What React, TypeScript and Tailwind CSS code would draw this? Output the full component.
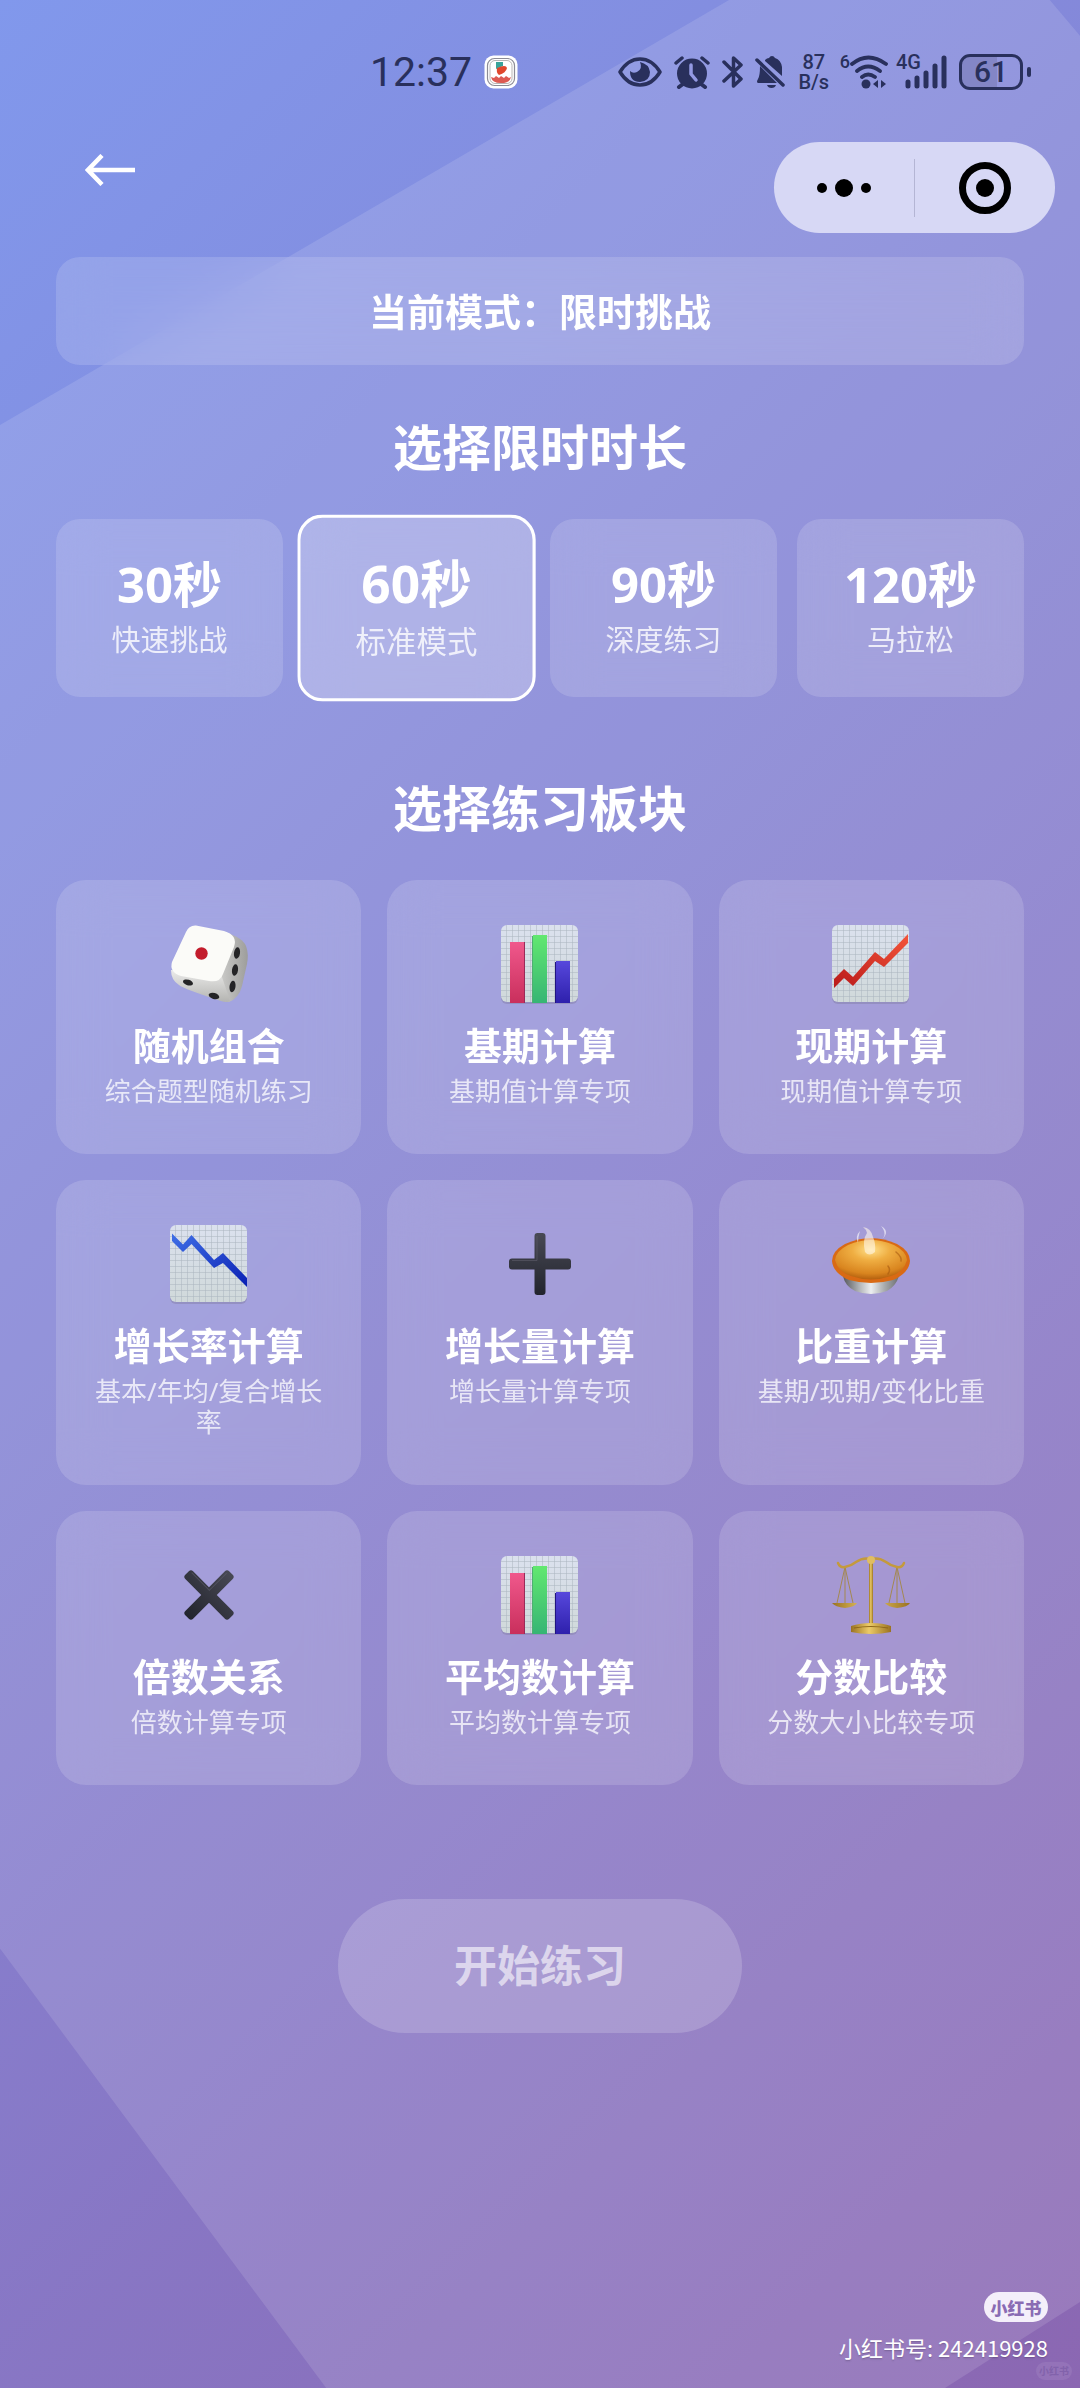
import { useState, type ReactNode } from "react";

const durations = [
  { value: 30, label: "快速挑战" },
  { value: 60, label: "标准模式" },
  { value: 90, label: "深度练习" },
  { value: 120, label: "马拉松" },
];

function GridPaper({ id }: { id: string }) {
  return (
    <>
      <defs>
        <pattern id={id + "-grid"} width="6" height="6" patternUnits="userSpaceOnUse">
          <path d="M6 0H0V6" fill="none" stroke="#a9b4be" strokeWidth="1" />
        </pattern>
        <linearGradient id={id + "-paper"} x1="0" y1="0" x2="0" y2="1">
          <stop offset="0" stopColor="#dbe1ee" />
          <stop offset="1" stopColor="#d0d9da" />
        </linearGradient>
      </defs>
      <rect x="1" y="2" width="77" height="78" rx="6" fill="#8a86b0" opacity="0.6" />
      <rect x="1" y="1" width="77" height="77" rx="6" fill={"url(#" + id + "-paper)"} />
      <rect x="1" y="1" width="77" height="77" rx="6" fill={"url(#" + id + "-grid)"} />
    </>
  );
}

function DiceIcon() {
  return (
    <svg viewBox="0 0 80 80" className="size-20" aria-hidden="true">
      <defs>
        <linearGradient id="dice-right" x1="0" y1="0" x2="1" y2="0">
          <stop offset="0" stopColor="#d4d4d2" />
          <stop offset="1" stopColor="#9d9d9b" />
        </linearGradient>
        <linearGradient id="dice-front" x1="0" y1="0" x2="0" y2="1">
          <stop offset="0" stopColor="#ebebea" />
          <stop offset="1" stopColor="#b4b4b1" />
        </linearGradient>
      </defs>
      <path d="M56 8Q74 14 77 22Q80 30 78 40L73 62Q70 74 60 78Q52 78 46 66Z" fill="url(#dice-right)" />
      <path d="M2 46Q2 56 10 61Q15 65 52 77Q58 79 61 77L52 50Z" fill="url(#dice-front)" />
      <path d="M17 8Q20 1 27 1.500L55 7Q69 11 65 23L54 50Q51 59 40 57L12 52Q0 48 3 38Z" fill="#fbfbf8" />
      <circle cx="32.500" cy="29.500" r="6.200" fill="#c31c2c" />
      <ellipse cx="68" cy="29" rx="3" ry="5.800" transform="rotate(8 68 29)" fill="#242426" />
      <ellipse cx="66" cy="46" rx="3" ry="5.800" transform="rotate(8 66 46)" fill="#242426" />
      <ellipse cx="63.500" cy="62.500" rx="3" ry="5.800" transform="rotate(8 63.500 62.500)" fill="#242426" />
      <ellipse cx="19" cy="58.500" rx="5.200" ry="2.800" transform="rotate(18 19 58.500)" fill="#242426" />
      <ellipse cx="45" cy="72" rx="5.400" ry="3" transform="rotate(16 45 72)" fill="#242426" />
    </svg>
  );
}

function BarsIcon({ id }: { id: string }) {
  return (
    <svg viewBox="0 0 80 80" className="size-20" aria-hidden="true">
      <GridPaper id={id} />
      <defs>
        <linearGradient id={id + "-r"} x1="0" y1="0" x2="0" y2="1">
          <stop offset="0" stopColor="#f0588c" />
          <stop offset="1" stopColor="#c92f5c" />
        </linearGradient>
        <linearGradient id={id + "-g"} x1="0" y1="0" x2="0" y2="1">
          <stop offset="0" stopColor="#62e870" />
          <stop offset="1" stopColor="#36b574" />
        </linearGradient>
        <linearGradient id={id + "-b"} x1="0" y1="0" x2="0" y2="1">
          <stop offset="0" stopColor="#5748dc" />
          <stop offset="1" stopColor="#2e20ac" />
        </linearGradient>
      </defs>
      <path d="M10 18h14v61H10z" fill={"url(#" + id + "-r)"} />
      <path d="M24 18h1v61h-1z" fill="#9a2a58" />
      <path d="M33 11h14v68H33z" fill={"url(#" + id + "-g)"} />
      <path d="M32 12H33v67h-1z" fill="#4fae72" />
      <path d="M56 37h14v42H56z" fill={"url(#" + id + "-b)"} />
      <path d="M55 38h1v41h-1z" fill="#211480" />
    </svg>
  );
}

function RisingIcon() {
  return (
    <svg viewBox="0 0 80 80" className="size-20" aria-hidden="true">
      <GridPaper id="rise" />
      <defs>
        <linearGradient id="rise-line" x1="0" y1="1" x2="1" y2="0">
          <stop offset="0" stopColor="#b91a1a" />
          <stop offset="1" stopColor="#f4553a" />
        </linearGradient>
      </defs>
      <path d="M3 55L13 45L22 53L44 28L53 35L77 10V19L53 43L44 37L22 62L13 54L3 64Z" fill="url(#rise-line)" />
    </svg>
  );
}

function FallingIcon() {
  return (
    <svg viewBox="0 0 80 80" className="size-20" aria-hidden="true">
      <GridPaper id="fall" />
      <defs>
        <linearGradient id="fall-line" x1="0" y1="0" x2="1" y2="1">
          <stop offset="0" stopColor="#3f6fe6" />
          <stop offset="1" stopColor="#0a1fb4" />
        </linearGradient>
      </defs>
      <path d="M3 9.500L14 20.500L22.500 11L45 36L54 29L78 54V63L54 39L45 44L22.500 20L14 28L3 17Z" fill="url(#fall-line)" />
    </svg>
  );
}

function CrossIcon({ diagonal = false }: { diagonal?: boolean }) {
  const id = diagonal ? "times" : "plus";
  return (
    <svg viewBox="0 0 80 80" className="size-20" aria-hidden="true">
      <defs>
        <linearGradient id={id + "-f"} x1="0" y1="0" x2="0" y2="1">
          <stop offset="0" stopColor="#484954" />
          <stop offset="1" stopColor="#22242d" />
        </linearGradient>
      </defs>
      <g transform={diagonal ? "rotate(45 40 40)" : undefined}>
        <path
          d="M34.500 12Q34.500 9 37.500 9H42.500Q45.500 9 45.500 12V34.500H68Q71 34.500 71 37.500V42.500Q71 45.500 68 45.500H45.500V68Q45.500 71 42.500 71H37.500Q34.500 71 34.500 68V45.500H12Q9 45.500 9 42.500V37.500Q9 34.500 12 34.500H34.500Z"
          fill={"url(#" + id + "-f)"}
        />
        <path d="M37 12V36.500H12" fill="none" stroke="#5d5e6a" strokeWidth="1" opacity="0.6" />
      </g>
    </svg>
  );
}

function PieIcon() {
  return (
    <svg viewBox="0 0 80 80" className="size-20" aria-hidden="true">
      <defs>
        <linearGradient id="pie-tin" x1="0" y1="0" x2="1" y2="0">
          <stop offset="0" stopColor="#55575a" />
          <stop offset="0.300" stopColor="#b4b7ba" />
          <stop offset="0.500" stopColor="#eceef0" />
          <stop offset="0.750" stopColor="#a6a9ab" />
          <stop offset="1" stopColor="#6c6e72" />
        </linearGradient>
        <radialGradient id="pie-top" cx="0.500" cy="0.250" r="0.750">
          <stop offset="0" stopColor="#ffe08a" />
          <stop offset="0.350" stopColor="#efae42" />
          <stop offset="0.800" stopColor="#d9851f" />
          <stop offset="1" stopColor="#b4600f" />
        </radialGradient>
      </defs>
      <path d="M12 52Q14 62 24 67Q40 73 56 67Q65 62 68 52Z" fill="url(#pie-tin)" />
      <path d="M1 37Q1 27 14 20Q27 14 40 14Q53 14 66 20Q79 27 79 37Q78 49 62 56Q40 62 18 56Q2 49 1 37Z" fill="#d96a14" />
      <path d="M4 36Q5 27 17 21Q29 16 40 16Q51 16 63 21Q75 27 76 36Q73 48 60 52Q40 59 20 52Q7 48 4 36Z" fill="url(#pie-top)" />
      <path d="M65 28Q71 33 70 37M57 42Q60 46 57 50" fill="none" stroke="#a65a10" strokeWidth="1.500" strokeLinecap="round" opacity="0.600" />
      <path d="M34 28Q31 16 36 9Q35 5 32 3Q40 4 42 13Q45 20 44 28Q38 33 34 28Z" fill="#fff6ea" opacity="0.600" />
      <path d="M48 18Q58 11 50 2Q61 8 48 18ZM27 19Q24 12 29 7Q27 13 27 19Z" fill="#fff" opacity="0.600" />
    </svg>
  );
}

function ScalesIcon() {
  return (
    <svg viewBox="0 0 80 80" className="size-20" aria-hidden="true">
      <defs>
        <linearGradient id="gold" x1="0" y1="0" x2="1" y2="0">
          <stop offset="0" stopColor="#9a7220" />
          <stop offset="0.450" stopColor="#eccb68" />
          <stop offset="1" stopColor="#9a7220" />
        </linearGradient>
      </defs>
      <path d="M14 12L6 48M14 12V48M14 12L22 48M66 12L58 48M66 12V48M66 12L74 48" fill="none" stroke="#a38850" strokeWidth="1" />
      <path d="M7 8Q9 13 14 12Q20 11 25 7Q32 2 40 4Q48 2 55 7Q60 11 66 12Q71 13 73 8" fill="none" stroke="#c49a3c" strokeWidth="2.500" strokeLinecap="round" />
      <path d="M38 6H42V70H38Z" fill="url(#gold)" />
      <circle cx="40" cy="5" r="4" fill="#e0bd62" />
      <path d="M1 48H26Q24 52 14 53Q4 52 1 48ZM54 48H79Q77 52 66 53Q57 52 54 48Z" fill="url(#gold)" />
      <path d="M20 71Q29 68 40 68Q52 68 60 71V77Q51 79 40 79Q29 79 20 77Z" fill="url(#gold)" />
      <path d="M23 73Q40 70 57 73" fill="none" stroke="#8c661a" strokeWidth="1.200" />
    </svg>
  );
}

const modules: { title: string; desc: string; icon: ReactNode }[] = [
  { title: "随机组合", desc: "综合题型随机练习", icon: <DiceIcon /> },
  { title: "基期计算", desc: "基期值计算专项", icon: <BarsIcon id="base" /> },
  { title: "现期计算", desc: "现期值计算专项", icon: <RisingIcon /> },
  { title: "增长率计算", desc: "基本/年均/复合增长率", icon: <FallingIcon /> },
  { title: "增长量计算", desc: "增长量计算专项", icon: <CrossIcon /> },
  { title: "比重计算", desc: "基期/现期/变化比重", icon: <PieIcon /> },
  { title: "倍数关系", desc: "倍数计算专项", icon: <CrossIcon diagonal /> },
  { title: "平均数计算", desc: "平均数计算专项", icon: <BarsIcon id="avg" /> },
  { title: "分数比较", desc: "分数大小比较专项", icon: <ScalesIcon /> },
];

function StatusBar() {
  return (
    <div className="flex h-[142px] items-start justify-between pt-[50px] pr-[49px] pl-[370px] font-['Roboto','Noto_Sans',sans-serif] text-[#29305c]">
      <div className="flex h-11 items-center gap-3">
        <span className="text-[41px] leading-none">12:37</span>
        <svg viewBox="0 0 34 34" className="size-[34px]" aria-hidden="true">
          <rect x="0.500" y="0.500" width="33" height="33" rx="9" fill="#fff" />
          <rect x="3.500" y="3.500" width="27" height="27" rx="7" fill="none" stroke="#8c8c96" strokeWidth="1.200" />
          <rect x="6" y="5.500" width="22" height="23" rx="5" fill="#fff" stroke="#a7a2a2" strokeWidth="0.800" />
          <path d="M12 7h7v4l-7 3z" fill="#3aa39a" />
          <path d="M13 13q9-4 10 0q-1 5-8 7q-3-2-2-7z" fill="#e0472c" />
          <path d="M7 22l3 1 2-2 3 2 2-2 3 2 2-2 3 2 2-1q-1 6-10 6t-10-6z" fill="#dd5a52" />
        </svg>
      </div>
      <div className="flex h-11 items-center">
        <svg viewBox="0 0 44 30" className="mr-3 h-[30px] w-11" aria-hidden="true">
          <path d="M2 15Q10 2 22 2T42 15Q34 28 22 28T2 15Z" fill="none" stroke="currentColor" strokeWidth="3.500" strokeLinejoin="round" />
          <path d="M22 5Q25 12 19 15Q15 17 12 14Q12 25 22 25Q32 24 32 15Q31 7 22 5Z" fill="currentColor" />
        </svg>
        <svg viewBox="0 0 36 34" className="mr-3 h-[34px] w-9" aria-hidden="true">
          <path d="M2 8L8 3M34 8L28 3" stroke="currentColor" strokeWidth="3.500" strokeLinecap="round" />
          <circle cx="18" cy="18.500" r="15" fill="currentColor" />
          <path d="M9 29L5 32M27 29L31 32" stroke="currentColor" strokeWidth="4" strokeLinecap="round" />
          <path d="M17 10V19L22 25" fill="none" stroke="#9399e3" strokeWidth="3.500" strokeLinecap="round" strokeLinejoin="round" />
        </svg>
        <svg viewBox="0 0 22 34" className="mr-2.5 h-[34px] w-[22px]" aria-hidden="true">
          <path d="M2 7L19 24L11.500 31V3L19 10L2 26" fill="none" stroke="currentColor" strokeWidth="3.500" strokeLinecap="round" strokeLinejoin="round" />
        </svg>
        <svg viewBox="0 0 32 34" className="mr-3 h-[34px] w-8" aria-hidden="true">
          <path d="M11 5Q13 3 15 3Q16 1 18 1T21 3Q27 5 28 12V21L11 6ZM6 11L23 28H4Q2 27 4 24Q6 21 6 11ZM13 30H22Q21 33 17.500 33T13 30Z" fill="currentColor" />
          <path d="M3 5L29 30" stroke="currentColor" strokeWidth="3.500" strokeLinecap="round" />
        </svg>
        <span className="mr-2.5 flex w-8 flex-col items-center text-[20px] leading-5 font-medium">
          <span>87</span>
          <span>B/s</span>
        </span>
        <span className="self-start text-[18px] leading-6 font-medium">6</span>
        <svg viewBox="0 0 38 34" className="mr-2 h-[34px] w-[38px]" aria-hidden="true">
          <path d="M2 9Q18-4 36 9M7 16Q18 7 30 16M12 22Q18 17 25 22" fill="none" stroke="currentColor" strokeWidth="3.800" strokeLinecap="round" />
          <circle cx="16" cy="29" r="4.500" fill="currentColor" />
          <path d="M28 25V33L23 29ZM31 25V33L36 29Z" fill="currentColor" />
        </svg>
        <span className="-mr-4 self-start text-[20px] leading-6 font-medium">4G</span>
        <svg viewBox="0 0 42 34" className="mr-3 h-[34px] w-[42px]" aria-hidden="true">
          <path d="M3 27V31M12 23V31M21 18V31M30 11V31M39 3V31" stroke="currentColor" strokeWidth="5" strokeLinecap="round" />
        </svg>
        <span className="flex h-9 w-16 items-center justify-center rounded-[11px] border-3 border-current bg-linear-to-r from-[#8386c6] from-60% to-transparent to-60% text-[30px] leading-none font-medium">61</span>
        <span className="ml-1 h-2.5 w-1 rounded-full bg-current" />
      </div>
    </div>
  );
}

export default function App() {
  const [duration, setDuration] = useState(60);
  const [selected, setSelected] = useState<string | null>(null);

  return (
    <div className="relative isolate flex min-h-screen flex-col overflow-hidden bg-[linear-gradient(135deg,#8198ec,#8b67b2)] font-['Noto_Sans','Noto_Sans_CJK_SC',sans-serif] text-white">
      <div className="absolute inset-0 -z-10 bg-white/12 [clip-path:polygon(0_17.8%,67.5%_0,97.2%_0,100%_1.5%,100%_96.4%,87.5%_100%,30.2%_100%,0_81.6%)]" />

      <StatusBar />

      <header className="flex h-[91px] items-start justify-between pr-[25px] pl-[85px]">
        <button type="button" aria-label="返回" className="pt-3">
          <svg viewBox="0 0 50 32" className="h-8 w-[50px]" fill="none" stroke="white" strokeWidth="4.500">
            <path d="M50 16H4M17 1.500L3 16L17 30.500" />
          </svg>
        </button>
        <div className="flex h-[91px] w-[281px] items-center rounded-full bg-[#d7d8f5] text-black">
          <button type="button" aria-label="更多" className="flex flex-1 items-center justify-center gap-2">
            <span className="size-2.5 rounded-full bg-current" />
            <span className="size-[18px] rounded-full bg-current" />
            <span className="size-2.5 rounded-full bg-current" />
          </button>
          <span className="h-[58px] w-px bg-[#b4b5d4]" />
          <button type="button" aria-label="关闭" className="flex flex-1 items-center justify-center">
            <span className="flex size-[52px] items-center justify-center rounded-full border-7 border-current">
              <span className="size-[18px] rounded-full bg-current" />
            </span>
          </button>
        </div>
      </header>

      <main className="flex flex-col px-14 pt-6">
        <p className="flex h-[108px] items-center justify-center rounded-3xl bg-white/15 text-[38px] font-semibold backdrop-blur-xl">
          当前模式：限时挑战
        </p>

        <h2 className="pt-12 text-center text-[49px] leading-[68px] font-bold">选择限时时长</h2>
        <div className="mt-[38px] grid grid-cols-4 gap-5">
          {durations.map((d) => (
            <button
              key={d.value}
              type="button"
              aria-pressed={duration === d.value}
              onClick={() => setDuration(d.value)}
              className={
                duration === d.value
                  ? "flex h-[178px] scale-105 flex-col items-center rounded-3xl border-3 border-white bg-white/26 pt-8 backdrop-blur-xl"
                  : "flex h-[178px] flex-col items-center rounded-3xl border-3 border-transparent bg-white/15 pt-8 backdrop-blur-xl"
              }
            >
              <span className="text-[49px] leading-[60px] font-bold">{d.value}秒</span>
              <span className="text-[29px] leading-[52px] text-white/80">{d.label}</span>
            </button>
          ))}
        </div>

        <h2 className="pt-[77px] text-center text-[49px] leading-[68px] font-bold">选择练习板块</h2>
        <div className="mt-[38px] grid grid-cols-3 gap-[26px]">
          {modules.map((m) => (
            <button
              key={m.title}
              type="button"
              aria-pressed={selected === m.title}
              onClick={() => setSelected(m.title)}
              className="flex flex-col items-center rounded-[30px] bg-white/15 px-[30px] pt-11 pb-[47px] backdrop-blur-xl aria-pressed:bg-white/30"
            >
              {m.icon}
              <span className="mt-3.5 text-[38px] leading-[54px] font-bold whitespace-nowrap">{m.title}</span>
              <span className="mt-1 text-[26px] leading-[31px] text-white/75">{m.desc}</span>
            </button>
          ))}
        </div>

        <button
          type="button"
          disabled={selected === null}
          className="mt-[114px] flex h-[134px] w-[404px] items-center justify-center self-center rounded-full bg-white/30 text-[43px] font-bold disabled:bg-white/18 disabled:text-white/60"
        >
          开始练习
        </button>
      </main>

      <footer className="absolute right-8 bottom-6 flex flex-col items-end gap-2 font-['Noto_Sans_CJK_SC',sans-serif]">
        <span className="flex h-[30px] w-16 items-center justify-center rounded-full bg-[#f4effa] text-[17px] leading-none font-black text-[#8a6cb4]">
          小红书
        </span>
        <span className="text-[22px] leading-[34px] text-shadow-sm">小红书号: 242419928</span>
      </footer>
      <span className="absolute right-2 bottom-2 flex h-[18px] w-9 items-center justify-center rounded-full bg-white/8 text-[10px] leading-none font-bold text-[#8262ab]">
        小红书
      </span>
    </div>
  );
}
